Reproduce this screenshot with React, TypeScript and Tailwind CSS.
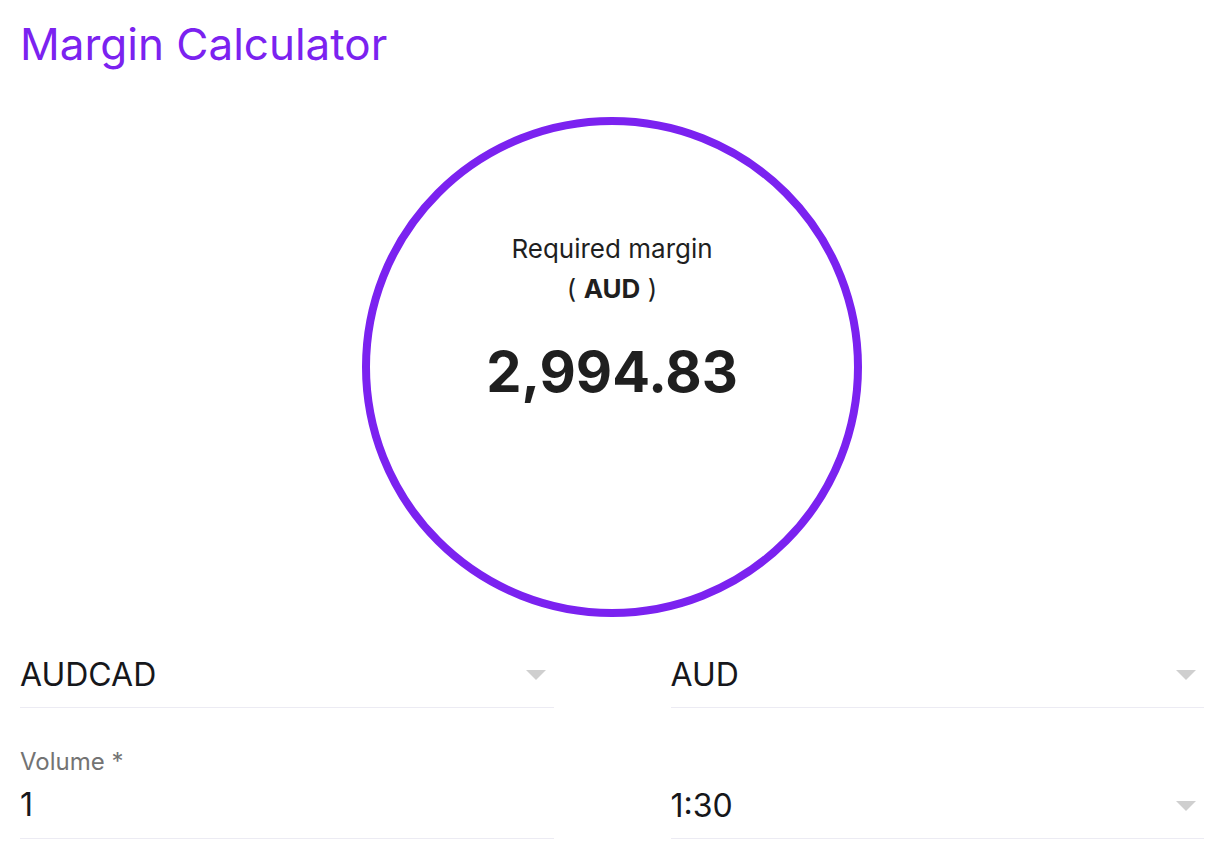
import React from "react";

function Arrow() {
    return (
        <svg width="20" height="10" viewBox="0 0 20 10" className="shrink-0">
            <path d="M0 0 L20 0 L10 10 Z" fill="#cfcfcf" />
        </svg>
    );
}

function SelectField({ value }: { value: string }) {
    return (
        <div className="flex items-center justify-between border-b border-[#ecebf3] pt-[12px] pb-[8px]">
            <span className="text-[32px] leading-[48px] text-[#16171b]">{value}</span>
            <span className="pr-[8px]">
                <Arrow />
            </span>
        </div>
    );
}

export default function App() {
    return (
        <div
            className="min-h-screen bg-white pl-[20px] pr-[22px] pt-[18px]"
            style={{ fontFamily: "Inter, 'Noto Sans', sans-serif" }}
        >
            <h1 className="text-[44px] leading-[52px] text-[#7b22f0]">Margin Calculator</h1>

            <div className="mt-[47px] flex justify-center">
                <div className="flex h-[500px] w-[500px] flex-col items-center rounded-full border-[8px] border-[#7b22f0] pt-[104px] text-[#1f1f1f]">
                    <div className="text-[26px] leading-[40px]">Required margin</div>
                    <div className="text-[26px] leading-[40px]">
                        ( <span className="font-bold">AUD</span> )
                    </div>
                    <div className="mt-[35px] text-[56px] leading-[56px] font-bold">2,994.83</div>
                </div>
            </div>

            <div className="mt-[22px] grid grid-cols-2 gap-x-[117px]">
                <SelectField value="AUDCAD" />
                <SelectField value="AUD" />

                <div className="mt-[39px] border-b border-[#ecebf3] pb-[9px]">
                    <div className="text-[24px] leading-[30px] text-[#737373]">Volume *</div>
                    <div className="mt-[4px] text-[32px] leading-[48px] text-[#16171b]">1</div>
                </div>
                <div className="mt-[39px] flex items-end">
                    <div className="w-full">
                        <SelectField value="1:30" />
                    </div>
                </div>
            </div>
        </div>
    );
}
